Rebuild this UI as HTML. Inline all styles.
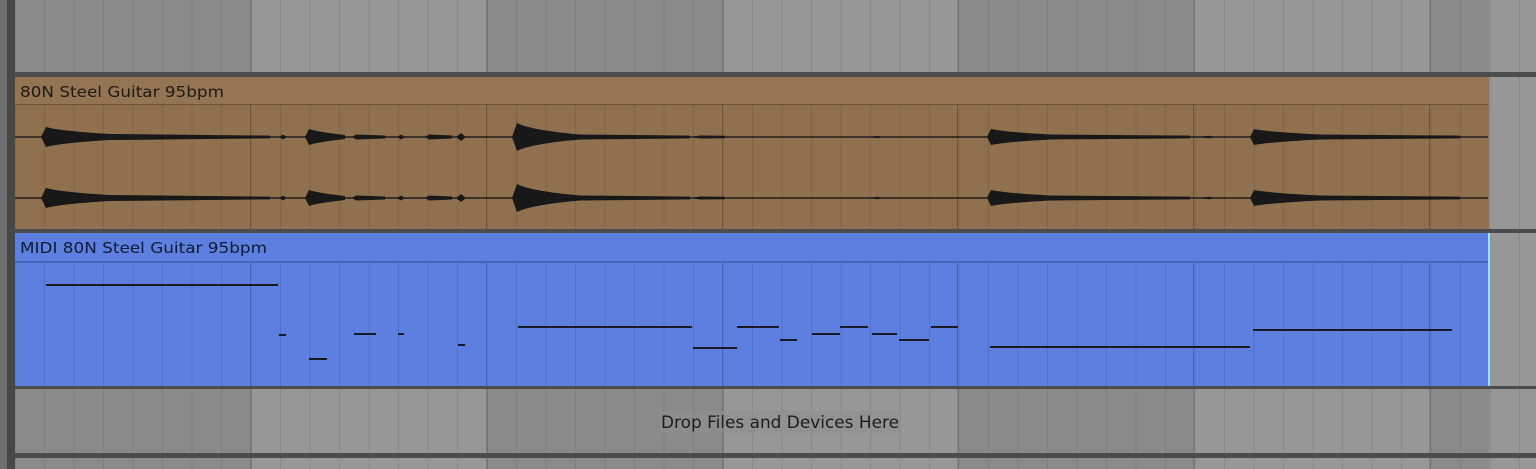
<!DOCTYPE html>
<html><head><meta charset="utf-8"><style>
html,body{margin:0;padding:0;width:1536px;height:469px;overflow:hidden;background:#8a8a8a}
svg{display:block}
text{font-family:"DejaVu Sans","Liberation Sans",sans-serif}
</style></head><body>
<svg width="1536" height="469" xmlns="http://www.w3.org/2000/svg">
<defs>
<pattern id="g" x="14.5" y="0" width="29.5" height="469" patternUnits="userSpaceOnUse">
<rect x="0" y="0" width="1" height="469" fill="#000" fill-opacity="0.09"/>
</pattern>
<pattern id="gc" x="14.5" y="0" width="29.5" height="469" patternUnits="userSpaceOnUse">
<rect x="0" y="0" width="1" height="469" fill="#000" fill-opacity="0.11"/>
</pattern>
</defs>
<rect x="0" y="0" width="1536" height="469" fill="#8a8a8a"/>
<rect x="251" y="0" width="236" height="469" fill="#979797"/>
<rect x="723" y="0" width="235" height="469" fill="#979797"/>
<rect x="1194" y="0" width="236" height="469" fill="#979797"/>
<rect x="1489" y="0" width="47" height="469" fill="#979797"/>
<rect x="0" y="0" width="1536" height="469" fill="url(#g)"/>
<g fill="#000" fill-opacity="0.12">
<rect x="250" y="0" width="2" height="469"/><rect x="486" y="0" width="2" height="469"/><rect x="722" y="0" width="2" height="469"/><rect x="957" y="0" width="2" height="469"/><rect x="1193" y="0" width="2" height="469"/><rect x="1429" y="0" width="2" height="469"/>
</g>
<g fill="#4c4c4c">
<rect x="0" y="72" width="1536" height="5"/>
<rect x="0" y="229" width="1536" height="4"/>
<rect x="0" y="386" width="1536" height="3"/>
<rect x="0" y="453" width="1536" height="5"/>
</g>
<rect x="0" y="0" width="7" height="469" fill="#6e6e6e"/>
<rect x="7" y="0" width="8" height="469" fill="#474747"/>
<rect x="15" y="77" width="1474" height="152" fill="#8f7150"/>
<rect x="15" y="77" width="1474" height="27" fill="#937553"/>
<rect x="15" y="104" width="1474" height="1" fill="#6e5538"/>
<rect x="15" y="105" width="1474" height="124" fill="url(#gc)"/>
<g fill="#6e5538"><rect x="250" y="105" width="1" height="124"/><rect x="486" y="105" width="1" height="124"/><rect x="722" y="105" width="1" height="124"/><rect x="957" y="105" width="1" height="124"/><rect x="1193" y="105" width="1" height="124"/><rect x="1429" y="105" width="1" height="124"/></g>
<text x="20" y="97" font-size="15.5" fill="#1e1a14" textLength="204" lengthAdjust="spacingAndGlyphs">80N Steel Guitar 95bpm</text>
<g fill="#181818">
<rect x="15" y="136.3" width="1473" height="1.4"/>
<rect x="15" y="197.3" width="1473" height="1.4"/>
</g>
<g id="w" fill="#181818">
<path d="M41 137 L46 127 Q60 131 110 134 L270 135.6 L270 138.4 L110 140 Q60 143 46 147 Z"/>
<path d="M279 137 L283 134.5 L287 137 L283 139.5 Z"/>
<path d="M305 137 L309 129 Q318 132 345 135 L345 139 Q318 142 309 145 Z"/>
<path d="M352 137 L356 134.5 L385 135.5 L385 138.5 L356 139.5 Z"/>
<path d="M397 137 L401 134.5 L405 137 L401 139.5 Z"/>
<path d="M425 137 L429 134.5 L452 135.5 L452 138.5 L429 139.5 Z"/>
<path d="M456 137 L461 133 L466 137 L461 141 Z"/>
<path d="M512 137 L517 123 Q530 130 580 134.5 L690 135.6 L690 138.4 L580 139.5 Q530 144 517 151 Z"/>
<path d="M690 137 L700 135.5 L725 135.8 L725 138.2 L700 138.5 Z"/>
<path d="M868 137 L878 135.8 L882 137 L878 138.2 Z"/>
<path d="M987 137 L991 129 Q1005 132 1050 134.5 L1190 135.6 L1190 138.4 L1050 139.5 Q1005 142 991 145 Z"/>
<path d="M1196 137 L1210 135.8 L1214 137 L1210 138.2 Z"/>
<path d="M1250 137 L1254 129 Q1270 132 1320 134.5 L1460 135.6 L1460 138.4 L1320 139.5 Q1270 142 1254 145 Z"/>
</g>
<use href="#w" transform="translate(0,61)"/>
<rect x="15" y="233" width="1474" height="153" fill="#5d7fe0"/>
<rect x="15" y="261" width="1474" height="2" fill="#4663b8"/>
<rect x="15" y="263" width="1474" height="123" fill="url(#gc)"/>
<g fill="#4663b8"><rect x="250" y="263" width="1" height="123"/><rect x="486" y="263" width="1" height="123"/><rect x="722" y="263" width="1" height="123"/><rect x="957" y="263" width="1" height="123"/><rect x="1193" y="263" width="1" height="123"/><rect x="1429" y="263" width="1" height="123"/></g>
<rect x="1488" y="233" width="2" height="153" fill="#9fe3f3"/>
<text x="20" y="253" font-size="15.5" fill="#101a33" textLength="247" lengthAdjust="spacingAndGlyphs">MIDI 80N Steel Guitar 95bpm</text>
<g fill="#151a26">
<rect x="46" y="284" width="232" height="2"/>
<rect x="279" y="334" width="7" height="2"/>
<rect x="309" y="358" width="18" height="2"/>
<rect x="354" y="333" width="22" height="2"/>
<rect x="398" y="333" width="6" height="2"/>
<rect x="458" y="344" width="7" height="2"/>
<rect x="518" y="326" width="174" height="2"/>
<rect x="693" y="347" width="44" height="2"/>
<rect x="737" y="326" width="42" height="2"/>
<rect x="780" y="339" width="17" height="2"/>
<rect x="812" y="333" width="28" height="2"/>
<rect x="840" y="326" width="28" height="2"/>
<rect x="872" y="333" width="25" height="2"/>
<rect x="899" y="339" width="30" height="2"/>
<rect x="931" y="326" width="27" height="2"/>
<rect x="990" y="346" width="260" height="2"/>
<rect x="1253" y="329" width="199" height="2"/>
</g>
<rect x="659" y="411" width="242" height="22" fill="#8f8f8f" fill-opacity="0.6"/>
<text x="661" y="428" font-size="16.5" fill="#1c1c1c" textLength="238" lengthAdjust="spacingAndGlyphs">Drop Files and Devices Here</text>
</svg>
</body></html>
